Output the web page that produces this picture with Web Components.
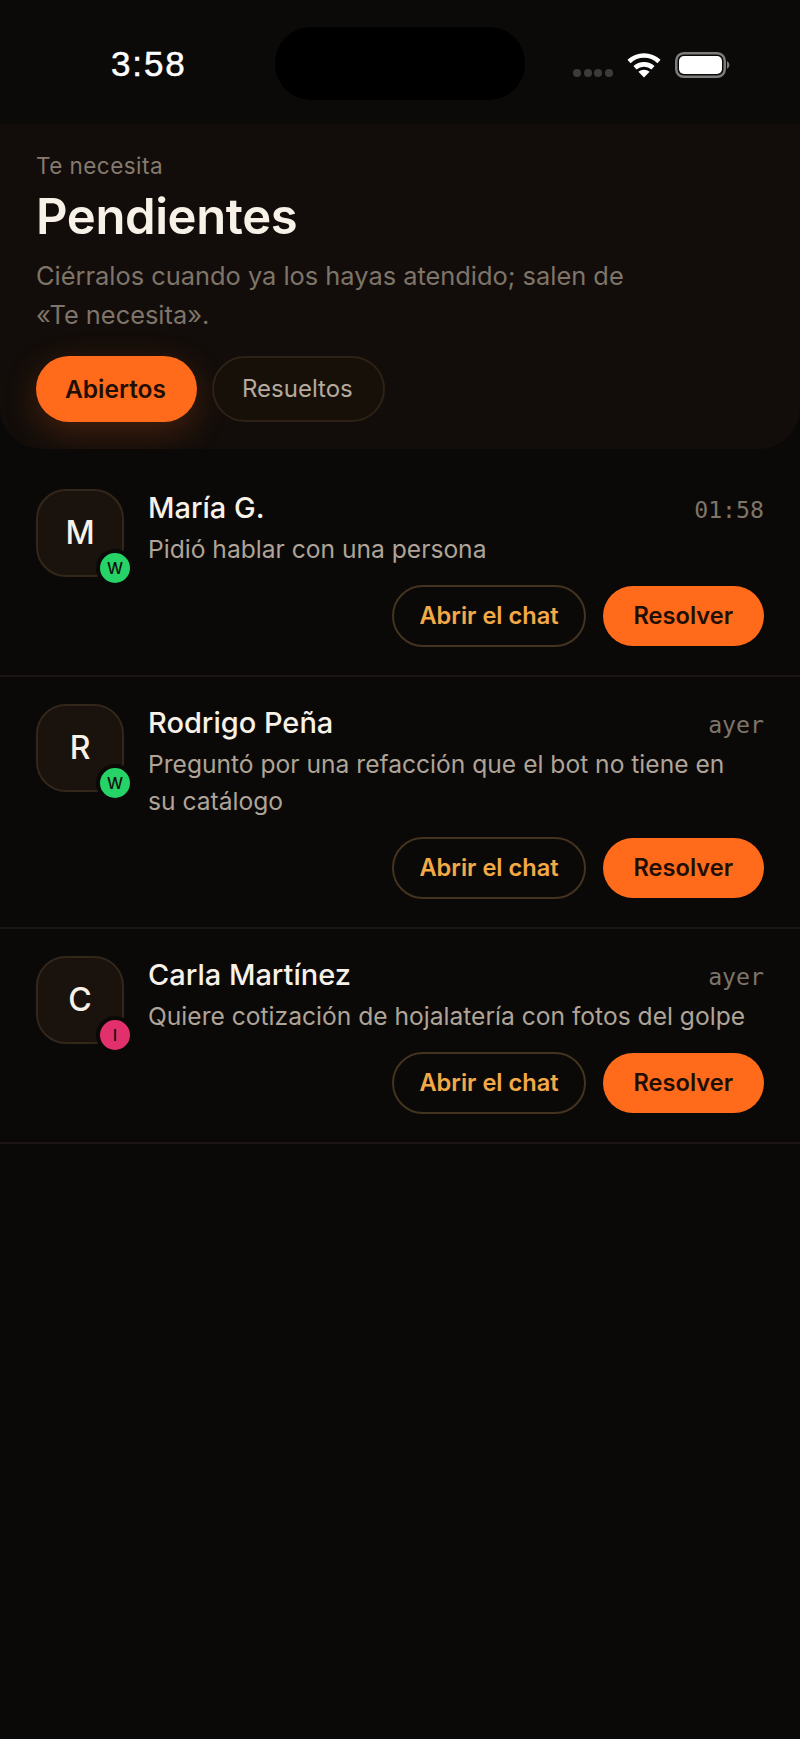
<!DOCTYPE html>
<html lang="es">
<head>
<meta charset="utf-8">
<title>Pendientes</title>
<style>
  html, body { margin: 0; background: #0a0908; }
  body { font-family: Inter, "Liberation Sans", sans-serif; min-height: 1739px; }
</style>
</head>
<body>
<app-screen>
  <status-bar time="3:58"></status-bar>
  <page-header label="Te necesita" heading="Pendientes">
    Ciérralos cuando ya los hayas atendido; salen de «Te necesita».
    <filter-pill slot="filters" active>Abiertos</filter-pill>
    <filter-pill slot="filters">Resueltos</filter-pill>
  </page-header>
  <pending-list>
    <pending-row name="María G." when="01:58" channel="W">Pidió hablar con una persona</pending-row>
    <pending-row name="Rodrigo Peña" when="ayer" channel="W">Preguntó por una refacción que el bot no tiene en su catálogo</pending-row>
    <pending-row name="Carla Martínez" when="ayer" channel="I">Quiere cotización de hojalatería con fotos del golpe</pending-row>
  </pending-list>
</app-screen>

<script>
class AppScreen extends HTMLElement {
  constructor() {
    super();
    this.attachShadow({mode: 'open'});
  }

  connectedCallback() {
    this.shadowRoot.innerHTML = `
      <style>
        :host {
          display: flex;
          flex-direction: column;
          width: 800px;
          min-height: 1739px;
          background: #0a0908;
        }
      </style>
      <slot></slot>
    `;
  }
}

class StatusBar extends HTMLElement {
  constructor() {
    super();
    this.attachShadow({mode: 'open'});
  }

  connectedCallback() {
    this.shadowRoot.innerHTML = `
      <style>
        :host {
          display: grid;
          grid-template-columns: 275px 250px 275px;
          height: 124px;
          background: #0b0a09;
        }
        .time {
          padding: 44px 0 0 111px;
          font: 400 35px/40px "Liberation Sans", sans-serif;
          letter-spacing: 1.900px;
          -webkit-text-stroke: 0.5px #fff;
          color: #fff;
        }
        .island {
          margin-top: 27px;
          height: 73px;
          border-radius: 36px;
          background: #000;
        }
        .icons {
          display: flex;
          align-items: flex-start;
          padding: 52px 0 0 48px;
        }
        .dots { display: flex; gap: 2.500px; margin: 17px 14px 0 0; }
        .dots i { width: 8px; height: 8px; border-radius: 50%; background: #3c3b3a; }
        svg { display: block; flex: none; }
        .wifi { margin-right: 14px; }
      </style>
      <div class="time">${this.getAttribute('time')}</div>
      <div class="island"></div>
      <div class="icons">
        <div class="dots"><i></i><i></i><i></i><i></i></div>
        <svg class="wifi" width="34" height="26" viewBox="0 0 34 26" fill="none" stroke="#fff" stroke-width="4.6">
          <path d="M2 9.500C10.500 1.500 23.500 1.500 32 9.500"/>
          <path d="M8 15.800C13 11.200 21 11.200 26 15.800"/>
          <path d="M17 25.500L11.400 19.800C14.600 17 19.400 17 22.600 19.800Z" fill="#fff" stroke="none"/>
        </svg>
        <svg width="56" height="26" viewBox="0 0 56 26">
          <rect x="1.250" y="1.250" width="48.500" height="23.500" rx="7.500" fill="none" stroke="#7c7c7c" stroke-width="2.500"/>
          <rect x="4" y="4" width="43" height="18" rx="5" fill="#fff"/>
          <path d="M52 9a4.500 4.500 0 0 1 0 8z" fill="#7c7c7c"/>
        </svg>
      </div>
    `;
  }
}

class PageHeader extends HTMLElement {
  constructor() {
    super();
    this.attachShadow({mode: 'open'});
  }

  connectedCallback() {
    this.shadowRoot.innerHTML = `
      <style>
        :host {
          display: block;
          box-sizing: border-box;
          height: 325px;
          padding: 27px 36px 0;
          background: #120d0a;
          border-radius: 0 0 41px 41px;
          overflow: hidden;
        }
        .label {
          font: 400 22.500px/30px Inter, sans-serif;
          letter-spacing: 0.450px;
          color: #857a6e;
        }
        h1 {
          margin: 5px 0 0;
          font: 600 49px/62px Inter, sans-serif;
          color: #f7f1e8;
          letter-spacing: -0.400px;
        }
        p {
          margin: 8px 0 0;
          width: 620px;
          font: 400 25.400px/39px Inter, sans-serif;
          color: #7f7468;
        }
        .filters {
          display: flex;
          gap: 15px;
          margin-top: 22px;
        }
      </style>
      <div class="label">${this.getAttribute('label')}</div>
      <h1>${this.getAttribute('heading')}</h1>
      <p><slot></slot></p>
      <div class="filters"><slot name="filters"></slot></div>
    `;
  }
}

class FilterPill extends HTMLElement {
  constructor() {
    super();
    this.attachShadow({mode: 'open'});
  }

  connectedCallback() {
    this.shadowRoot.innerHTML = `
      <style>
        :host {
          display: flex;
          align-items: center;
          box-sizing: border-box;
          height: 66px;
          padding: 0 30px 0 28px;
          border-radius: 33px;
          border: 2px solid #2e2216;
          background: #171009;
          font: 400 24px/30px Inter, sans-serif;
          color: #b5aa9d;
        }
        :host([active]) {
          border: 0;
          padding: 0 31px 0 29px;
          background: #ff6b1a;
          font-size: 24.500px;
          font-weight: 600;
          color: #1f0e04;
          box-shadow: 0 10px 34px rgba(255, 107, 26, .22);
        }
      </style>
      <slot></slot>
    `;
  }
}

class ActionButton extends HTMLElement {
  constructor() {
    super();
    this.attachShadow({mode: 'open'});
  }

  connectedCallback() {
    this.shadowRoot.innerHTML = `
      <style>
        :host {
          display: flex;
          align-items: center;
          box-sizing: border-box;
          height: 62px;
          padding: 0 25px;
          border-radius: 31px;
          border: 2px solid #44331f;
          font: 600 23.600px/30px Inter, sans-serif;
          color: #f4a947;
        }
        :host([primary]) {
          border: 0;
          height: 60px;
          margin-top: 1px;
          padding: 0 31px;
          background: #ff6b1a;
          color: #1f0e04;
        }
      </style>
      <slot></slot>
    `;
  }
}

class ChannelAvatar extends HTMLElement {
  constructor() {
    super();
    this.attachShadow({mode: 'open'});
  }

  connectedCallback() {
    const channel = this.getAttribute('channel');

    this.shadowRoot.innerHTML = `
      <style>
        :host {
          display: flex;
          align-items: center;
          justify-content: center;
          position: relative;
          box-sizing: border-box;
          flex: none;
          width: 88px;
          height: 88px;
          border-radius: 30px;
          border: 2px solid #33261a;
          background: #1a120c;
          font: 500 32px/1 Inter, sans-serif;
          color: #f7f1e8;
        }
        .badge {
          position: absolute;
          right: -12px;
          bottom: -12px;
          display: flex;
          align-items: center;
          justify-content: center;
          width: 30px;
          height: 30px;
          border: 4px solid #0a0908;
          border-radius: 50%;
          background: ${channel === 'I' ? '#e1306c' : '#25d366'};
          font: 500 16px/1 Inter, sans-serif;
          color: #10100e;
        }
      </style>
      <slot></slot>
      <span class="badge">${channel}</span>
    `;
  }
}

class PendingList extends HTMLElement {
  constructor() {
    super();
    this.attachShadow({mode: 'open'});
  }

  connectedCallback() {
    this.shadowRoot.innerHTML = `
      <style>
        :host {
          display: block;
          padding-top: 13px;
        }
      </style>
      <slot></slot>
    `;
  }
}

class PendingRow extends HTMLElement {
  constructor() {
    super();
    this.attachShadow({mode: 'open'});
  }

  connectedCallback() {
    const name = this.getAttribute('name');

    this.shadowRoot.innerHTML = `
      <style>
        :host {
          display: flex;
          gap: 24px;
          padding: 27px 36px 28px;
          border-bottom: 2px solid #1b1613;
        }
        .body { flex: 1; min-width: 0; }
        .top {
          display: flex;
          justify-content: space-between;
          align-items: baseline;
        }
        .name {
          font: 500 29px/37px Inter, sans-serif;
          color: #f7f1e8;
        }
        .when {
          font: 400 23.200px/30px "DejaVu Sans Mono", monospace;
          color: #7f7468;
        }
        .text {
          margin: 5px 14px 0 0;
          font: 400 24.600px/37px Inter, sans-serif;
          color: #afa497;
        }
        .actions {
          display: flex;
          justify-content: flex-end;
          gap: 17px;
          margin-top: 17px;
        }
      </style>
      <channel-avatar channel="${this.getAttribute('channel')}">${name[0]}</channel-avatar>
      <div class="body">
        <div class="top">
          <span class="name">${name}</span>
          <span class="when">${this.getAttribute('when')}</span>
        </div>
        <div class="text"><slot></slot></div>
        <div class="actions">
          <action-button>Abrir el chat</action-button>
          <action-button primary>Resolver</action-button>
        </div>
      </div>
    `;
  }
}

customElements.define('app-screen', AppScreen);
customElements.define('status-bar', StatusBar);
customElements.define('page-header', PageHeader);
customElements.define('filter-pill', FilterPill);
customElements.define('action-button', ActionButton);
customElements.define('channel-avatar', ChannelAvatar);
customElements.define('pending-list', PendingList);
customElements.define('pending-row', PendingRow);
</script>
</body>
</html>
